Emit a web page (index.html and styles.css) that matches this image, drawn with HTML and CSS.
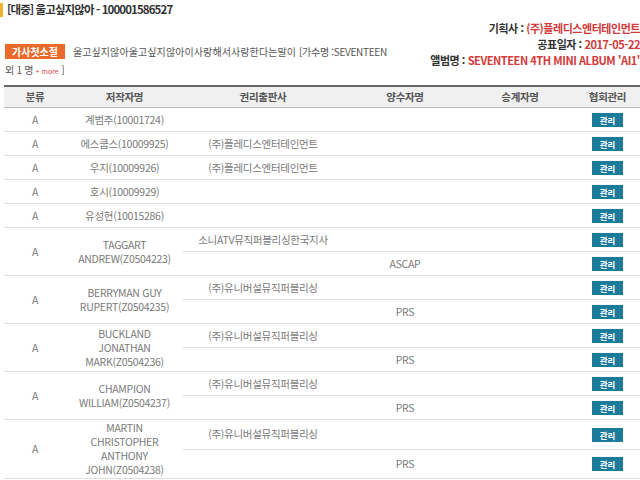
FILE: index.html
```html
<!DOCTYPE html>
<html lang="ko">
<head>
<meta charset="utf-8">
<title>울고싶지않아</title>
<link rel="stylesheet" href="styles.css">
</head>
<body>
<div class="page">
  <h1 class="title"><span class="mark"></span>[대중] 울고싶지않아 - 100001586527</h1>
  <div class="head">
    <div class="lyric">
      <span class="lyric-btn">가사첫소절</span>
      <span class="lyric-text">울고싶지않아울고싶지않아이사랑해서사랑한다는말이</span>
      <span class="singer">[가수명 :SEVENTEEN<br>외 1 명 <span class="more">+ more</span> ]</span>
    </div>
    <div class="info">
      <div><b class="lbl">기획사 :</b> <b class="val">(주)플레디스엔터테인먼트</b></div>
      <div><b class="lbl">공표일자 :</b> <b class="val">2017-05-22</b></div>
      <div><b class="lbl">앨범명 :</b> <b class="val">SEVENTEEN 4TH MINI ALBUM 'AI1'</b></div>
    </div>
  </div>
  <table class="grid">
    <colgroup>
      <col class="c1"><col class="c2"><col class="c3"><col class="c4"><col class="c5"><col class="c6">
    </colgroup>
    <thead>
      <tr><th>분류</th><th>저작자명</th><th>권리출판사</th><th>양수자명</th><th>승계자명</th><th>협회관리</th></tr>
    </thead>
    <tbody>
      <tr><td>A</td><td>계범주(10001724)</td><td></td><td></td><td></td><td><span class="btn">관리</span></td></tr>
      <tr><td>A</td><td>에스쿱스(10009925)</td><td>(주)플레디스엔터테인먼트</td><td></td><td></td><td><span class="btn">관리</span></td></tr>
      <tr><td>A</td><td>우지(10009926)</td><td>(주)플레디스엔터테인먼트</td><td></td><td></td><td><span class="btn">관리</span></td></tr>
      <tr><td>A</td><td>호시(10009929)</td><td></td><td></td><td></td><td><span class="btn">관리</span></td></tr>
      <tr><td>A</td><td>유성현(10015286)</td><td></td><td></td><td></td><td><span class="btn">관리</span></td></tr>
      <tr><td rowspan="2">A</td><td rowspan="2" class="multi">TAGGART<br>ANDREW(Z0504223)</td><td>소니ATV뮤직퍼블리싱한국지사</td><td></td><td></td><td><span class="btn">관리</span></td></tr>
      <tr><td></td><td>ASCAP</td><td></td><td><span class="btn">관리</span></td></tr>
      <tr><td rowspan="2">A</td><td rowspan="2" class="multi">BERRYMAN GUY<br>RUPERT(Z0504235)</td><td>(주)유니버설뮤직퍼블리싱</td><td></td><td></td><td><span class="btn">관리</span></td></tr>
      <tr><td></td><td>PRS</td><td></td><td><span class="btn">관리</span></td></tr>
      <tr><td rowspan="2">A</td><td rowspan="2" class="multi">BUCKLAND<br>JONATHAN<br>MARK(Z0504236)</td><td>(주)유니버설뮤직퍼블리싱</td><td></td><td></td><td><span class="btn">관리</span></td></tr>
      <tr><td></td><td>PRS</td><td></td><td><span class="btn">관리</span></td></tr>
      <tr><td rowspan="2">A</td><td rowspan="2" class="multi">CHAMPION<br>WILLIAM(Z0504237)</td><td>(주)유니버설뮤직퍼블리싱</td><td></td><td></td><td><span class="btn">관리</span></td></tr>
      <tr><td></td><td>PRS</td><td></td><td><span class="btn">관리</span></td></tr>
      <tr><td rowspan="2">A</td><td rowspan="2" class="multi">MARTIN<br>CHRISTOPHER<br>ANTHONY<br>JOHN(Z0504238)</td><td>(주)유니버설뮤직퍼블리싱</td><td></td><td></td><td><span class="btn">관리</span></td></tr>
      <tr><td></td><td>PRS</td><td></td><td><span class="btn">관리</span></td></tr>
      <tr><td>A</td><td></td><td></td><td></td><td></td><td><span class="btn">관리</span></td></tr>
    </tbody>
  </table>
</div>
</body>
</html>
```

FILE: styles.css
```css
html, body {
  margin: 0;
  padding: 0;
  background: #fff;
  overflow: hidden;
}
body {
  width: 640px;
  height: 480px;
  font-family: "Noto Sans CJK KR", "Noto Sans", sans-serif;
  color: #777;
}
.page {
  width: 648px;
}
.title {
  margin: 0;
  padding-top: 1px;
  height: 19px;
  line-height: 16px;
  font-size: 11.5px;
  font-weight: bold;
  color: #333;
  letter-spacing: -0.9px;
  display: flex;
  align-items: flex-start;
  gap: 4px;
}
.mark {
  display: inline-block;
  width: 3px;
  height: 14px;
  margin-top: 2px;
  background: #f0b030;
}
.head {
  display: flex;
  justify-content: space-between;
  align-items: flex-start;
}
.lyric {
  width: 400px;
  padding: 23px 0 0 5px;
  font-size: 10px;
  line-height: 18px;
  color: #555;
  letter-spacing: 0.1px;
  white-space: nowrap;
}
.lyric-btn {
  display: inline-block;
  background: #ea6a2a;
  color: #fff;
  font-weight: bold;
  font-size: 10px;
  line-height: 15px;
  padding: 0 7px;
  margin-right: 5px;
  letter-spacing: 0;
}
.singer {
  letter-spacing: -0.3px;
}
.more {
  color: #e04848;
  font-size: 7px;
  letter-spacing: 0;
}
.info {
  text-align: right;
  font-size: 11px;
  line-height: 16px;
  white-space: nowrap;
  letter-spacing: -0.45px;
  padding-right: 8px;
}
.lbl {
  color: #333;
}
.val {
  color: #d23a3a;
}
.grid {
  margin: 5px 0 0 4px;
  width: 638px;
  border-collapse: collapse;
  table-layout: fixed;
  font-size: 10.5px;
  line-height: 14px;
  letter-spacing: -0.3px;
}
.c1 { width: 62px; }
.c2 { width: 117px; }
.c3 { width: 160px; }
.c4 { width: 124px; }
.c5 { width: 106px; }
.c6 { width: 69px; }
.grid th {
  border-top: 2px solid #666;
  border-bottom: 1px solid #bbb;
  background: #f0f0f0;
  color: #555;
  font-weight: bold;
  font-size: 10.5px;
  height: 20px;
  padding: 0;
  text-align: center;
}
.grid td {
  border-bottom: 1px solid #ddd;
  height: 23px;
  padding: 0 2px;
  text-align: center;
  vertical-align: middle;
  white-space: nowrap;
  color: #7a7a7a;
}
.grid td.multi {
  padding: 1px 2px;
}
.btn {
  display: inline-block;
  width: 31px;
  height: 14px;
  line-height: 14px;
  background: #1a7b9b;
  color: #fff;
  font-size: 8.5px;
  font-weight: bold;
  letter-spacing: 0;
  vertical-align: middle;
}
```
